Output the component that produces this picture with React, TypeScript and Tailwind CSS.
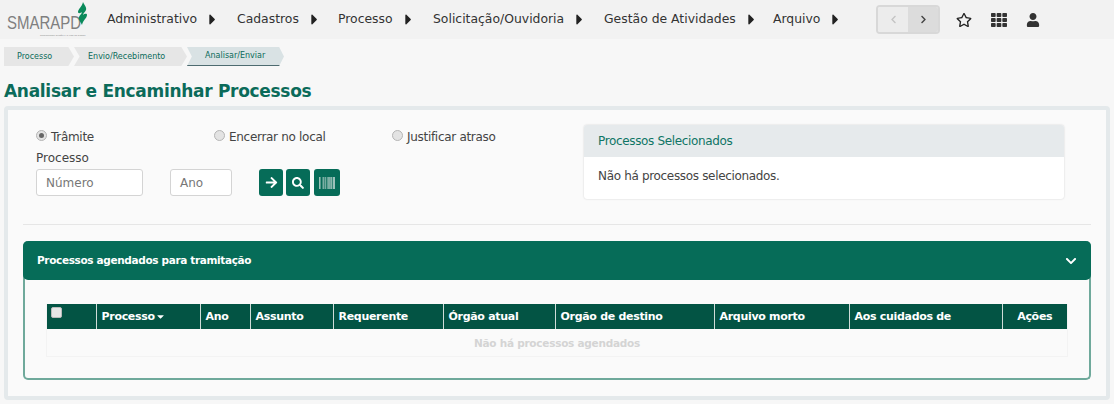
import { FaArrowRight, FaBarcode, FaCaretDown, FaCaretRight, FaChevronDown, FaChevronLeft, FaChevronRight, FaRegStar, FaSearch, FaTh, FaUser } from "react-icons/fa";

const menu = [
  { label: "Administrativo", w: "w-[130px]" },
  { label: "Cadastros", w: "w-[101px]" },
  { label: "Processo", w: "w-[95px]" },
  { label: "Solicitação/Ouvidoria", w: "w-[171px]" },
  { label: "Gestão de Atividades", w: "w-[169px]" },
  { label: "Arquivo", w: "w-[80px]" },
];

const columns = [
  { label: "Processo", w: "w-[104px]", sort: true },
  { label: "Ano", w: "w-[50px]" },
  { label: "Assunto", w: "w-[83px]" },
  { label: "Requerente", w: "w-[110px]" },
  { label: "Órgão atual", w: "w-[112px]" },
  { label: "Orgão de destino", w: "w-[159px]" },
  { label: "Arquivo morto", w: "w-[135px]" },
  { label: "Aos cuidados de", w: "w-[153px]" },
];

function Logo() {
  return (
    <div className="relative h-[39px] w-[107px] shrink-0">
      <span className="absolute left-[7px] top-[16px] origin-bottom scale-y-[1.25] font-['Liberation_Sans',sans-serif] text-[15px] leading-[18px] text-[#7f7f7f]">SMARAPD</span>
      <span className="absolute left-[40px] top-[34px] whitespace-nowrap font-['Liberation_Sans',sans-serif] text-[2.5px] leading-[3px] text-[#888]">Simplificando Gestão e a Vida na Cidade</span>
      <svg className="absolute left-[76px] top-[2px]" width="12" height="23" viewBox="0 0 12 23">
        <path d="M7 0c1 3 4 5 3 8-.5 2-3 3-3 5 1-1 4-2 4 0 0 3-4 5-5 10-1-3-4-5-3-8 .5-2 3-3 3-5-1 1-4 2-4 0 0-3 4-5 5-10z" fill="#0a8a5a" />
      </svg>
    </div>
  );
}

function Navbar() {
  return (
    <header className="flex h-[39px] items-center bg-[#f2f2f2]">
      <Logo />
      <nav className="flex">
        {menu.map((m) => (
          <div key={m.label} className={`flex items-center ${m.w} text-[12.4px] text-[#333]`}>
            <span>{m.label}</span>
            <FaCaretRight className="ml-[7px] text-[17px] text-[#222]" />
          </div>
        ))}
      </nav>
      <div className="ml-[23px] flex h-[29px] w-[64px] overflow-hidden rounded-[4px] border-2 border-[#d8d8d8]">
        <div className="flex flex-1 items-center justify-center bg-[#ececec] text-[9px] text-[#c4c4c4]"><FaChevronLeft /></div>
        <div className="flex flex-1 items-center justify-center bg-[#dcdcdc] text-[9px] text-[#444]"><FaChevronRight /></div>
      </div>
      <div className="ml-[16px] flex items-center gap-[19px] text-[#333]">
        <FaRegStar className="text-[16px] text-[#222]" />
        <FaTh className="text-[16px]" />
        <FaUser className="text-[14px]" />
      </div>
    </header>
  );
}

function Breadcrumb() {
  return (
    <div className="ml-[4px] mt-[8px] flex h-[19px] text-[8px] text-[#0b6b5a]">
      <div className="flex w-[70px] items-center bg-[#e6e6e6] pl-[13px] [clip-path:polygon(0_0,92%_0,100%_50%,92%_100%,0_100%)]">Processo</div>
      <div className="flex w-[113px] items-center bg-[#e6e6e6] pl-[14px] [clip-path:polygon(0_0,95%_0,100%_50%,95%_100%,0_100%,5%_50%)]">Envio/Recebimento</div>
      <div className="flex w-[97px] items-center border-b border-[#4d6b70] bg-[#d9e2e4] pl-[18px] [clip-path:polygon(0_0,95%_0,100%_50%,95%_100%,0_100%,5%_50%)]">Analisar/Enviar</div>
    </div>
  );
}

function Radio({ label, checked }: { label: string; checked?: boolean }) {
  return (
    <label className="flex w-[178px] items-center gap-[4px] text-[12px] tracking-[-0.3px] text-[#444]">
      <span className="mb-[3px] flex h-[11px] w-[11px] items-center justify-center rounded-full border border-[#b5b5b5] bg-[#e3e3e3]">
        {checked && <span className="h-[5px] w-[5px] rounded-full bg-[#666]" />}
      </span>
      {label}
    </label>
  );
}

function SearchForm() {
  return (
    <div className="w-[548px] shrink-0 pt-[4px]">
      <div className="flex h-[16px]">
        <Radio label="Trâmite" checked />
        <Radio label="Encerrar no local" />
        <Radio label="Justificar atraso" />
      </div>
      <div className="mt-[5px] text-[12px] leading-[16px] text-[#444]">Processo</div>
      <div className="mt-[3px] flex items-center">
        <div className="flex h-[27px] w-[107px] items-center rounded-[3px] border border-[#d4d4d4] bg-white pl-[9px] text-[12px] text-[#777]">Número</div>
        <div className="ml-[27px] flex h-[27px] w-[62px] items-center rounded-[3px] border border-[#d4d4d4] bg-white pl-[9px] text-[12px] text-[#777]">Ano</div>
        <div className="ml-[27px] flex text-white">
          <button className="flex h-[27px] w-[24px] items-center justify-center rounded-[3px] bg-[#066c58] text-[13px]"><FaArrowRight /></button>
          <button className="ml-[3px] flex h-[27px] w-[24px] items-center justify-center rounded-[3px] bg-[#066c58] text-[12px]"><FaSearch /></button>
          <button className="ml-[4px] flex h-[27px] w-[26px] items-center justify-center rounded-[3px] bg-[#066c58] text-[16px] text-[#d8e4e0]"><FaBarcode /></button>
        </div>
      </div>
    </div>
  );
}

function SelectedCard() {
  return (
    <div className="h-[74px] w-[480px] overflow-hidden rounded-[3px] bg-white shadow-[0_0_2px_rgba(0,0,0,0.18)]">
      <div className="flex h-[32px] items-center bg-[#e6eaec] pl-[14px] text-[12px] tracking-[-0.35px] text-[#0f7565]">Processos Selecionados</div>
      <div className="pl-[14px] pt-[11px] text-[12px] leading-[16px] tracking-[-0.33px] text-[#444]">Não há processos selecionados.</div>
    </div>
  );
}

function ScheduledTable() {
  return (
    <section className="mx-[15px] mt-[16px] h-[139px] rounded-[5px] border-2 border-t-0 border-[#6fa99b]">
      <div className="-mx-[2px] flex h-[39px] items-center justify-between rounded-[5px] bg-[#066c58] px-[14px] text-white">
        <span className="text-[10.5px] font-bold tracking-[-0.35px]">Processos agendados para tramitação</span>
        <FaChevronDown className="text-[12px]" />
      </div>
      <div className="mx-[21px] mt-[24px] border border-t-0 border-[#f3f3f3]">
        <table className="w-[1020px] table-fixed border-collapse">
          <thead>
            <tr className="h-[25px] bg-[#035444] text-left text-[11px] font-bold tracking-[-0.3px] text-white">
              <th className="w-[49px] p-0 align-top">
                <span className="ml-[4px] mt-[3px] block h-[11px] w-[11px] rounded-[2px] border border-[#bbb] bg-[#e6e6e6]" />
              </th>
              {columns.map((c) => (
                <th key={c.label} className={`${c.w} border-l border-[#cfdcd8] p-0 pl-[5px] pt-[1px]`}>
                  {c.label}
                  {c.sort && <FaCaretDown className="inline text-[11px]" />}
                </th>
              ))}
              <th className="border-l border-[#cfdcd8] p-0 pt-[1px] text-center">Ações</th>
            </tr>
          </thead>
          <tbody>
            <tr className="h-[27px]">
              <td colSpan={10} className="p-0 pt-[3px] text-center text-[10.5px] font-bold tracking-[-0.25px] text-[#d4d4d4]">Não há processos agendados</td>
            </tr>
          </tbody>
        </table>
      </div>
    </section>
  );
}

export default function App() {
  return (
    <div className="h-[404px] w-[1114px] overflow-hidden bg-[#f7f7f7] font-['DejaVu_Sans',sans-serif]">
      <Navbar />
      <Breadcrumb />
      <h1 className="ml-[4px] mt-[13px] text-[17px] font-bold leading-[24px] tracking-[-0.3px] text-[#0b6b5a]">Analisar e Encaminhar Processos</h1>
      <main className="ml-[4px] mt-[3px] h-[294px] w-[1106px] rounded-[4px] border-[4px] border-[#e4e9eb] bg-[#fafafa]">
        <div className="flex pl-[28px] pt-[15px]">
          <SearchForm />
          <SelectedCard />
        </div>
        <hr className="mx-[15px] mt-[25px] border-[#e6e6e6]" />
        <ScheduledTable />
      </main>
    </div>
  );
}
